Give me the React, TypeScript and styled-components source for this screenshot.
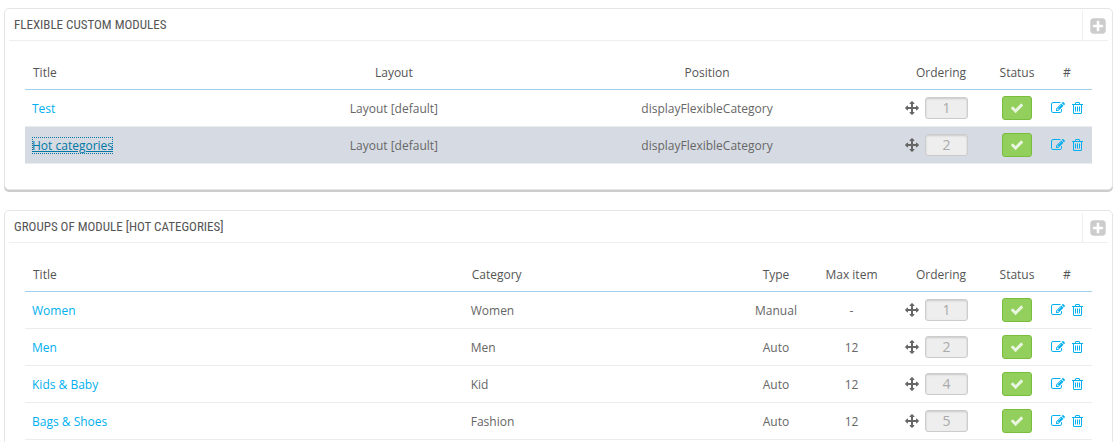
import React from "react";
import styled, { createGlobalStyle, css } from "styled-components";

const GlobalStyle = createGlobalStyle`
  * { box-sizing: border-box; }
  body {
    margin: 0;
    background: #fff;
    color: #666;
    font: 12px/18px "Open Sans", "Noto Sans", sans-serif;
    scrollbar-width: none;
  }
`;

const Page = styled.main`
  display: flex;
  flex-direction: column;
  gap: 20px;
  padding: 8px 6px 20px 4px;
`;

const Panel = styled.section`
  border: 1px solid #e6e6e6;
  border-radius: 5px;
  box-shadow: 0 2px 0 #ccc;
  background: #fff;
`;

const PanelHeader = styled.header`
  display: flex;
  align-items: flex-end;
  justify-content: space-between;
  height: 32px;
  margin: 0 4px;
  border-bottom: 1px solid #eee;
`;

const PanelTitle = styled.h3`
  margin: 0;
  padding-left: 5px;
  color: #555;
  font: 400 13px/30px "Ubuntu Condensed", "Roboto Condensed", "Liberation Sans Narrow", sans-serif;
  text-transform: uppercase;
`;

const AddButton = styled.button`
  display: flex;
  align-items: center;
  justify-content: center;
  width: 26px;
  height: 29px;
  margin: 0;
  padding: 0 0 0 4px;
  border: 0;
  border-left: 1px solid #eee;
  background: none;
  color: #ccc;
  cursor: pointer;
`;

const PanelBody = styled.div`
  padding: 14px 20px 25px;
`;

const Table = styled.table`
  width: 100%;
  table-layout: fixed;
  border-collapse: separate;
  border-spacing: 0;
`;

type Align = "left" | "center";

const HeadCell = styled.th<{ $align?: Align; $width?: string }>`
  width: ${(p) => p.$width ?? "auto"};
  height: 35px;
  padding: 2px ${(p) => (p.$align === "left" ? "8px" : "0")} 0;
  border-bottom: 1px solid #a0d0eb;
  color: #555;
  font-weight: 400;
  text-align: ${(p) => p.$align ?? "center"};
  white-space: nowrap;
`;

const Cell = styled.td`
  height: 37px;
  padding: 0;
  border-bottom: 1px solid #eaedef;
  text-align: center;
  white-space: nowrap;
`;

const TextCell = styled(Cell)<{ $align?: Align }>`
  padding: 2px ${(p) => (p.$align === "left" ? "7px" : "0")} 0;
  text-align: ${(p) => p.$align ?? "center"};
`;

const Row = styled.tr<{ $selected?: boolean }>`
  background: ${(p) => (p.$selected ? "#d6dbe3" : "transparent")};
`;

const TitleLink = styled.a<{ $selected?: boolean }>`
  color: #00aff0;
  text-decoration: none;
  ${(p) =>
    p.$selected &&
    css`
      color: #0077a4;
      text-decoration: underline;
      outline: 1px dotted #0077a4;
      outline-offset: -1px;
    `}
`;

const OrderGroup = styled.div`
  display: flex;
  align-items: center;
  justify-content: center;
  gap: 6px;
  padding-right: 9px;
`;

const OrderInput = styled.input`
  width: 43px;
  height: 22px;
  margin: 0;
  padding: 0 0 2px;
  border: 1px solid #ccc;
  border-radius: 3px;
  background: #eee;
  box-shadow: inset 0 1px 2px rgba(0, 0, 0, 0.15);
  color: #aaa;
  font: 14px/18px "Open Sans", sans-serif;
  text-align: center;
`;

const StatusButton = styled.button`
  display: flex;
  align-items: center;
  justify-content: center;
  width: 30px;
  height: 24px;
  margin: 0 auto;
  padding: 0;
  border: 1px solid #79bd3c;
  border-radius: 3px;
  background: #92cf5c;
  color: #e9f5df;
  cursor: pointer;
`;

const Actions = styled.div`
  display: flex;
  align-items: center;
  justify-content: center;
  gap: 7px;
`;

const IconLink = styled.a`
  display: flex;
  color: #00aff0;
`;

const Svg = styled.svg`
  display: block;
  flex: none;
  fill: currentColor;
`;

const icons = {
  check:
    "M1671 566q0 40-28 68l-724 724-136 136q-28 28-68 28t-68-28l-136-136-362-362q-28-28-28-68t28-68l136-136q28-28 68-28t68 28l294 295 656-657q28-28 68-28t68 28l136 136q28 28 28 68z",
  move: "M1792 896q0 26-19 45l-256 256q-19 19-45 19t-45-19-19-45v-128h-384v384h128q26 0 45 19t19 45-19 45l-256 256q-19 19-45 19t-45-19l-256-256q-19-19-19-45t19-45 45-19h128v-384h-384v128q0 26-19 45t-45 19-45-19l-256-256q-19-19-19-45t19-45l256-256q19-19 45-19t45 19 19 45v128h384v-384h-128q-26 0-45-19t-19-45 19-45l256-256q19-19 45-19t45 19l256 256q19 19 19 45t-19 45-45 19h-128v384h384v-128q0-26 19-45t45-19 45 19l256 256q19 19 19 45z",
  edit: "M888 1184l116-116-152-152-116 116v56h96v96h56zm440-720q-16-16-33 1l-350 350q-17 17-1 33t33-1l350-350q17-17 1-33zm80 594v190q0 119-84.500 203.500t-203.500 84.500h-832q-119 0-203.500-84.500t-84.500-203.500v-832q0-119 84.500-203.500t203.500-84.500h832q63 0 117 25 15 7 18 23 3 17-9 29l-49 49q-14 14-32 8-23-6-45-6h-832q-66 0-113 47t-47 113v832q0 66 47 113t113 47h832q66 0 113-47t47-113v-126q0-13 9-22l64-64q15-15 35-7t20 29zm-96-738l288 288-672 672h-288v-288zm444 132l-92 92-288-288 92-92q28-28 68-28t68 28l152 152q28 28 28 68t-28 68z",
  trash:
    "M704 736v576q0 14-9 23t-23 9h-64q-14 0-23-9t-9-23v-576q0-14 9-23t23-9h64q14 0 23 9t9 23zm256 0v576q0 14-9 23t-23 9h-64q-14 0-23-9t-9-23v-576q0-14 9-23t23-9h64q14 0 23 9t9 23zm256 0v576q0 14-9 23t-23 9h-64q-14 0-23-9t-9-23v-576q0-14 9-23t23-9h64q14 0 23 9t9 23zm128 724v-948h-896v948q0 22 7 40.500t14.500 27 10.500 8.500h832q3 0 10.500-8.500t14.500-27 7-40.500zm-672-1076h448l-48-117q-7-9-17-11h-317q-10 2-17 11zm928 32v64q0 14-9 23t-23 9h-96v948q0 83-47 143.500t-113 60.500h-832q-66 0-113-58.500t-47-141.500v-952h-96q-14 0-23-9t-9-23v-64q0-14 9-23t23-9h309l70-167q15-37 54-63t79-26h320q40 0 79 26t54 63l70 167h309q14 0 23 9t9 23z",
  plus: "M1408 960v-128q0-26-19-45t-45-19h-320v-320q0-26-19-45t-45-19h-128q-26 0-45 19t-19 45v320h-320q-26 0-45 19t-19 45v128q0 26 19 45t45 19h320v320q0 26 19 45t45 19h128q26 0 45-19t19-45v-320h320q26 0 45-19t19-45zm256-544v960q0 119-84.500 203.500t-203.500 84.500h-960q-119 0-203.500-84.500t-84.500-203.500v-960q0-119 84.500-203.500t203.500-84.500h960q119 0 203.500 84.500t84.500 203.500z",
};

function Icon({ name, size = 14 }: { name: keyof typeof icons; size?: number }) {
  return (
    <Svg width={size} height={size} viewBox="0 0 1792 1792" aria-hidden="true">
      <path d={icons[name]} />
    </Svg>
  );
}

/* Trash glyph is narrower than its em box, so it is drawn in a cropped view. */
function TrashIcon() {
  return (
    <Svg width={11} height={14} viewBox="192 0 1408 1792" aria-hidden="true">
      <path d={icons.trash} />
    </Svg>
  );
}

interface Column {
  label: string;
  align?: Align;
  width?: string;
}

interface Item {
  title: string;
  values: string[];
  order: number;
  selected?: boolean;
}

const controlColumns: Column[] = [
  { label: "Ordering", width: "102px" },
  { label: "Status", width: "50px" },
  { label: "#", width: "50px" },
];

const moduleColumns: Column[] = [
  { label: "Title", align: "left" },
  { label: "Layout", width: "24.4%" },
  { label: "Position", width: "34.3%" },
];

const modules: Item[] = [
  { title: "Test", values: ["Layout [default]", "displayFlexibleCategory"], order: 1 },
  { title: "Hot categories", values: ["Layout [default]", "displayFlexibleCategory"], order: 2, selected: true },
];

const groupColumns: Column[] = [
  { label: "Title", align: "left" },
  { label: "Category", align: "left", width: "25.8%" },
  { label: "Type", width: "74px" },
  { label: "Max item", width: "77px" },
];

const groups: Item[] = [
  { title: "Women", values: ["Women", "Manual", "-"], order: 1 },
  { title: "Men", values: ["Men", "Auto", "12"], order: 2 },
  { title: "Kids & Baby", values: ["Kid", "Auto", "12"], order: 4 },
  { title: "Bags & Shoes", values: ["Fashion", "Auto", "12"], order: 5 },
];

function ListPanel({ title, columns, items }: { title: string; columns: Column[]; items: Item[] }) {
  return (
    <Panel>
      <PanelHeader>
        <PanelTitle>{title}</PanelTitle>
        <AddButton type="button" aria-label="Add">
          <Icon name="plus" size={18} />
        </AddButton>
      </PanelHeader>
      <PanelBody>
        <Table>
          <thead>
            <tr>
              {[...columns, ...controlColumns].map((c) => (
                <HeadCell key={c.label} scope="col" $align={c.align} $width={c.width}>
                  {c.label}
                </HeadCell>
              ))}
            </tr>
          </thead>
          <tbody>
            {items.map((item) => (
              <Row key={item.title} $selected={item.selected}>
                <TextCell $align="left">
                  <TitleLink href="#" $selected={item.selected}>
                    {item.title}
                  </TitleLink>
                </TextCell>
                {item.values.map((value, i) => (
                  <TextCell key={i} $align={columns[i + 1].align}>
                    {value}
                  </TextCell>
                ))}
                <Cell>
                  <OrderGroup>
                    <Icon name="move" />
                    <OrderInput disabled defaultValue={item.order} aria-label={`Order of ${item.title}`} />
                  </OrderGroup>
                </Cell>
                <Cell>
                  <StatusButton type="button" aria-label={`Disable ${item.title}`}>
                    <Icon name="check" />
                  </StatusButton>
                </Cell>
                <Cell>
                  <Actions>
                    <IconLink href="#" aria-label={`Edit ${item.title}`}>
                      <Icon name="edit" />
                    </IconLink>
                    <IconLink href="#" aria-label={`Delete ${item.title}`}>
                      <TrashIcon />
                    </IconLink>
                  </Actions>
                </Cell>
              </Row>
            ))}
          </tbody>
        </Table>
      </PanelBody>
    </Panel>
  );
}

export default function App() {
  return (
    <>
      <GlobalStyle />
      <Page>
        <ListPanel title="Flexible custom modules" columns={moduleColumns} items={modules} />
        <ListPanel title="Groups of module [Hot categories]" columns={groupColumns} items={groups} />
      </Page>
    </>
  );
}
